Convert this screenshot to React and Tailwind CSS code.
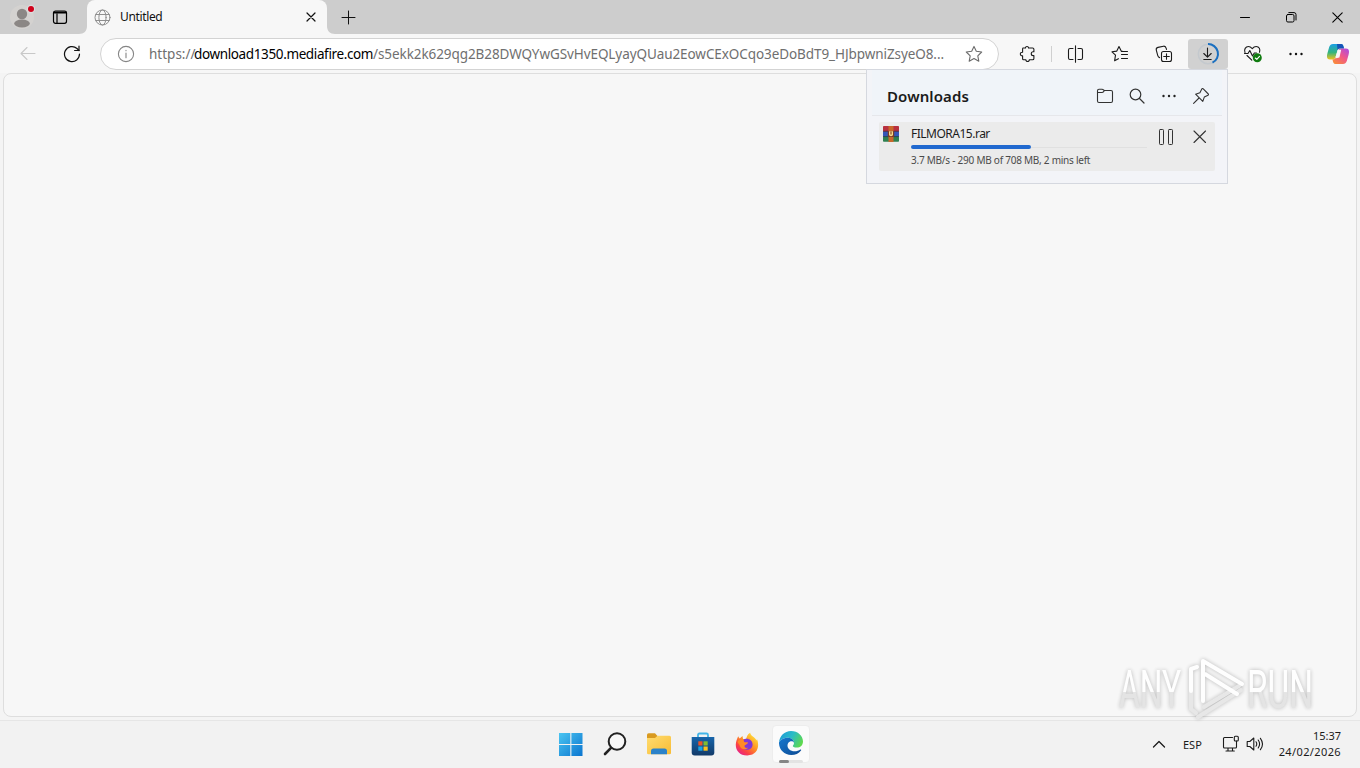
import React from 'react'

const PATH = '/s5ekk2k629qg2B28DWQYwGSvHvEQLyayQUau2EowCExOCqo3eDoBdT9_HJbpwniZsyeO8...'

function Svg({ size = 20, width, height, box, stroke = '#1b1b1b', sw = 1.1, className = '', children }) {
  const w = width || size
  const h = height || size
  return (
    <svg
      width={w}
      height={h}
      viewBox={box || `0 0 ${w} ${h}`}
      fill="none"
      stroke={stroke}
      strokeWidth={sw}
      strokeLinecap="round"
      strokeLinejoin="round"
      className={`shrink-0 ${className}`}
    >
      {children}
    </svg>
  )
}

function ToolButton({ children, className = '' }) {
  return <button className={`w-11 h-[30px] flex items-center justify-center shrink-0 ${className}`}>{children}</button>
}

function TabStrip() {
  return (
    <div className="h-[34px] bg-[#cdcdcd] flex shrink-0">
      {/* Profile */}
      <div className="w-[44px] flex items-center justify-center">
        <Svg size={26} stroke="none">
          <circle cx="13" cy="13" r="12" fill="#d4d2d0" />
          <circle cx="13" cy="10" r="5.2" fill="#8b8785" />
          <ellipse cx="13" cy="19.5" rx="7.8" ry="4" fill="#8b8785" />
          <circle cx="22" cy="5" r="4.2" fill="#dcdcdc" />
          <circle cx="22" cy="5" r="3" fill="#d0021b" />
        </Svg>
      </div>
      {/* Workspaces */}
      <div className="w-[32px] flex items-center justify-center">
        <Svg size={16} stroke="#000" sw={1.2}>
          <rect x="1.5" y="2" width="13" height="12.3" rx="2" />
          <path d="M1.5 4H14.5M2 3H14M5 5V14" />
        </Svg>
      </div>
      <div className="w-[11px] flex items-end justify-end">
        <Svg size={8} stroke="none">
          <path d="M8 0V8H0C5 8 8 5 8 0Z" fill="#f7f7f7" />
        </Svg>
      </div>
      {/* Active tab */}
      <div className="w-[240px] bg-[#f7f7f7] rounded-t-[8px] flex items-center pl-[7px]">
        <Svg size={17} box="0 0 17 17" stroke="#8f8f8f" sw={1}>
          <circle cx="8.5" cy="8.5" r="7.5" />
          <ellipse cx="8.5" cy="8.5" rx="3.6" ry="7.5" />
          <path d="M1.8 5.5H15.2M1.8 11.5H15.2" />
        </Svg>
        <span className="ml-[9px] text-[12px] leading-4 text-[#111] tracking-[-0.35px] flex-1">Untitled</span>
        <Svg size={10} stroke="#111" sw={1.2} className="mr-[11px]">
          <path d="M1 1L9 9M9 1L1 9" />
        </Svg>
      </div>
      <div className="w-[8px] flex items-end">
        <Svg size={8} stroke="none">
          <path d="M0 0V8H8C3 8 0 5 0 0Z" fill="#f7f7f7" />
        </Svg>
      </div>
      <div className="w-[27px] flex items-center justify-center">
        <Svg size={15} stroke="#111" sw={1}>
          <path d="M7.5 1V14M1 7.5H14" />
        </Svg>
      </div>
      {/* Window controls */}
      <div className="ml-auto flex">
        <div className="w-[46px] flex items-center justify-center">
          <Svg size={10} stroke="#000" sw={1}>
            <path d="M.5 5.5H9.5" />
          </Svg>
        </div>
        <div className="w-[46px] flex items-center justify-center">
          <Svg size={11} stroke="#000" sw={1}>
            <rect x=".5" y="2.5" width="7.5" height="7.5" rx="1.4" />
            <path d="M2.8 .6H8a2 2 0 0 1 2 2V8" />
          </Svg>
        </div>
        <div className="w-[46px] flex items-center justify-center">
          <Svg size={11} stroke="#000" sw={1.1}>
            <path d="M.8 .8L10.2 10.2M10.2 .8L.8 10.2" />
          </Svg>
        </div>
      </div>
    </div>
  )
}

function CopilotIcon() {
  return (
    <Svg size={24} stroke="none">
      <defs>
        <linearGradient id="cpa" x1="0" y1="0" x2="0" y2="1">
          <stop offset="0" stopColor="#1a9fe6" />
          <stop offset=".55" stopColor="#35b57c" />
          <stop offset="1" stopColor="#f2c21c" />
        </linearGradient>
        <linearGradient id="cpb" x1="1" y1="0" x2=".2" y2="1">
          <stop offset="0" stopColor="#a54be8" />
          <stop offset=".5" stopColor="#f0568b" />
          <stop offset="1" stopColor="#f98a3c" />
        </linearGradient>
      </defs>
      <path d="M7 2H15C17 2 17.5 4 18 6.5H14C12 6.5 11.5 8 11 10L9.6 15C9 17 8 17.5 6 17.5H4C.5 17.5 .6 14 1.5 11L3.2 5C4 3 5 2 7 2Z" fill="url(#cpa)" />
      <path d="M11 2H15C17 2 17.5 4 18 6.5H14C12.5 6.5 12 7 11.5 8.3Z" fill="#1554b8" />
      <path d="M17 22H9.5C7.5 22 7 20 6.5 17.5C9 17.5 9.5 16.5 10 15L12 9C12.6 7.2 13.5 6.5 15.5 6.5H20C23.5 6.5 23.4 10 22.5 13L20.8 19C20 21 19 22 17 22Z" fill="url(#cpb)" />
      <path d="M9.8 14.2L11.9 7.8L15.2 7.8L13.4 15.4L10 16.3Z" fill="#f7f7f7" />
    </Svg>
  )
}

function Toolbar() {
  return (
    <div className="h-[39px] bg-[#f7f7f7] flex items-center pl-[6px] shrink-0">
      <ToolButton>
        <Svg size={16} stroke="#c8c8c8">
          <path d="M15 7.5H1M7 1.5L1 7.5L7 13.5" />
        </Svg>
      </ToolButton>
      <ToolButton>
        <Svg size={18} stroke="#111" sw={1.2}>
          <path d="M16.5 9A7.5 7.5 0 1 1 14 3.5L16 5.5" />
          <path d="M16 1.2V5.5H11.6" />
        </Svg>
      </ToolButton>

      {/* Address bar */}
      <div className="ml-[6px] mt-px w-[899px] h-[32px] rounded-full bg-white border border-[#d3d3d3] flex items-center pl-[16px] pr-[15px]">
        <Svg size={18} stroke="#858585" sw={1.1}>
          <circle cx="9" cy="9" r="7.6" />
          <path d="M9 8V12.8M9 5.4V5.8" />
        </Svg>
        <div className="ml-[14px] flex text-[13.5px] leading-5 text-[#6f6f6f] whitespace-nowrap">
          <span className="w-[45px]">https://</span>
          <span className="w-[179px] text-black tracking-[-0.37px]">download1350.mediafire.com</span>
          <span className="tracking-[-0.08px]">{PATH}</span>
        </div>
        <Svg size={18} stroke="#6b6b6b" sw={1.1} className="ml-auto">
          <path d="M9 1.4L11.3 6.3L16.7 7L12.8 10.8L13.8 16.2L9 13.6L4.2 16.2L5.2 10.8L1.3 7L6.7 6.3Z" />
        </Svg>
      </div>

      <div className="ml-[6px] flex items-center">
        <ToolButton>
          <Svg size={18} className="ml-[2px]">
            <path d="M3.8 3H6.5C6.3 .9 9.7 .9 9.5 3H13.6Q14.9 3 14.9 4.3V6.7H14.2C11.6 6.7 11.6 10.6 14.2 10.6H14.9V13.5Q14.9 14.8 13.6 14.8H10.3C10.5 17 6.7 17 6.9 14.8H4.6Q3.6 14.8 3.6 13.8V10.8C.6 11 .6 7 3.6 7.2V4Z" />
          </Svg>
        </ToolButton>
        <div className="w-px h-4 bg-[#d0d0d0] ml-[2px] mr-[2px]" />
        <ToolButton>
          <Svg size={18}>
            <path d="M8.5 .8V17.2M6 3.5H3Q1.5 3.5 1.5 5V13Q1.5 14.5 3 14.5H6M11 3.5H14Q15.5 3.5 15.5 5V13Q15.5 14.5 14 14.5H11" />
          </Svg>
        </ToolButton>
        <ToolButton>
          <Svg size={18}>
            <path d="M11.4 6.3L10.2 6.1L8 1.5L5.8 6.1L1 6.8L4.5 10.2L3.6 15.8L7.4 13.7M10.5 6.5H16.5M10.5 9.5H16.5M10.5 13.5H16.5" />
          </Svg>
        </ToolButton>
        <ToolButton>
          <Svg size={18}>
            <rect x="6.5" y="6.5" width="10" height="10" rx="2" />
            <path d="M11.5 8.7V14.3M8.7 11.5H14.3M4.6 12.6C3.4 12.3 3 11.4 2.7 10.3L1.3 5.2C.9 3.7 1.6 2.8 3 2.4L8.5 1.2C10 1 10.8 1.6 11.2 3.3L11.5 4.4" />
          </Svg>
        </ToolButton>
        <ToolButton className="!w-10 mx-[2px] bg-[#d1d1d1] rounded-[3px]">
          <Svg size={24}>
            <circle cx="12" cy="12" r="9.7" stroke="#c4c9ce" strokeWidth={1.5} />
            <path d="M12 2.1A9.8 9.8 0 0 1 16.5 20.7" stroke="#1a6fc0" strokeWidth="2" strokeLinecap="butt" />
            <path d="M11.5 6V15M7.8 11.5L11.5 15.2L15.2 11.5M7.8 17.5H15.2" />
          </Svg>
        </ToolButton>
        <ToolButton>
          <Svg size={20} className="ml-[2px]">
            <path d="M2 8.5C.8 5.5 2.5 2.5 5.5 2.5C7.5 2.5 8.5 3.8 9.3 4.6C10.2 3.5 11.3 2.5 13.2 2.5C16.2 2.5 17.5 5.5 16.5 8.2M4 11.5L8.8 16.2" />
            <path d="M1.5 9.5H5L6.8 6.5L9.5 12L11.3 9H13.5" />
            <circle cx="14.3" cy="13.8" r="4.5" fill="#107c10" stroke="none" />
            <path d="M12.3 14L13.8 15.3L16.5 12.4" stroke="#fff" />
          </Svg>
        </ToolButton>
        <ToolButton>
          <Svg size={16} stroke="none">
            <circle cx="2.5" cy="8" r="1.2" fill="#111" />
            <circle cx="8" cy="8" r="1.2" fill="#111" />
            <circle cx="13.5" cy="8" r="1.2" fill="#111" />
          </Svg>
        </ToolButton>
        <ToolButton className="-ml-[2px]">
          <CopilotIcon />
        </ToolButton>
      </div>
    </div>
  )
}

function RarIcon() {
  return (
    <Svg size={16} stroke="none">
      <rect x="0" y="0" width="16" height="5.3" rx=".8" fill="#b8303f" />
      <rect x="0" y="5.3" width="16" height="5.3" rx=".8" fill="#3556b8" />
      <rect x="0" y="10.6" width="16" height="5.2" rx=".8" fill="#2e8050" />
      <rect x="0" y="4.8" width="16" height=".9" fill="#4b2336" />
      <rect x="0" y="10.2" width="16" height=".9" fill="#1e3a4c" />
      <rect x="5.5" y="0" width="5" height="16" fill="#c9672b" />
      <rect x="4.8" y="5" width="6.4" height="6" rx="1" fill="#7a3b26" />
      <path d="M6 5.2V8.8Q6 10.2 8 10.2Q10 10.2 10 8.8V5.2" fill="#f7d98a" />
      <rect x="7.4" y="5.5" width="1.2" height="3" fill="#8a4a2a" />
    </Svg>
  )
}

function DownloadsPanel() {
  return (
    <div className="absolute left-[866px] top-[69px] w-[362px] h-[115px] border border-[#d5d8df] bg-[#f3f4f8]">
      <div className="h-[46px] mx-[5px] border-b border-[#e6e7eb] bg-[#f0f4f9] flex items-center pl-[15px] pr-[5px] pt-[6px]">
        <h2 className="flex-1 text-[15px] leading-5 font-semibold text-[#1b1b1b] tracking-[0.1px]">Downloads</h2>
        <div className="flex">
          <span className="w-8 flex justify-center">
            <Svg size={18} stroke="#333" sw={1.1}>
              <path d="M1.5 5.5H6Q7 5.5 7.6 4.7L8.3 3.5H15Q16.5 3.5 16.5 5V14Q16.5 15.5 15 15.5H3Q1.5 15.5 1.5 14V3.7Q1.5 2.3 3 2.3H6Q7 2.3 7.6 3L8.3 3.5" />
            </Svg>
          </span>
          <span className="w-8 flex justify-center">
            <Svg size={18} stroke="#333" sw={1.2}>
              <circle cx="7.5" cy="7.5" r="5.3" />
              <path d="M11.5 11.5L16 16" />
            </Svg>
          </span>
          <span className="w-8 flex justify-center">
            <Svg size={18} stroke="none">
              <circle cx="3.5" cy="9" r="1.2" fill="#222" />
              <circle cx="9" cy="9" r="1.2" fill="#222" />
              <circle cx="14.5" cy="9" r="1.2" fill="#222" />
            </Svg>
          </span>
          <span className="w-8 flex justify-center">
            <Svg size={18} stroke="#333" sw={1.1}>
              <path d="M11 1.7L16.3 7Q16.8 7.7 16 8.2L12.3 10.1L10.8 14.4L3.6 7.2L7.9 5.7L9.8 2Q10.3 1.2 11 1.7ZM7 11L1.6 16.4" />
            </Svg>
          </span>
        </div>
      </div>

      {/* File row */}
      <div className="mt-[6px] ml-[12px] mr-[12px] h-[49px] bg-[#ebebeb] rounded-[2px] flex pl-[4px]">
        <div className="pt-[4px]">
          <RarIcon />
        </div>
        <div className="ml-[12px] w-[236px] pt-[4px]">
          <p className="text-[12px] leading-4 text-[#1b1b1b] tracking-[-0.5px] whitespace-nowrap">FILMORA15.rar</p>
          <div className="mt-[3px] h-[4px] flex items-center">
            <div className="w-[120px] h-[4px] rounded-full bg-[#2169cf]" />
            <div className="flex-1 h-px bg-[#e0e0e0]" />
          </div>
          <p className="mt-[3px] text-[10px] leading-4 text-[#4a4a4a] tracking-[-0.24px] whitespace-nowrap">3.7 MB/s - 290 MB of 708 MB, 2 mins left</p>
        </div>
        <div className="ml-auto flex pt-[6px] pr-[6px] gap-[16px]">
          <Svg size={18} stroke="#333" sw={1}>
            <rect x="2.5" y="1.5" width="4" height="15" rx=".8" />
            <rect x="11.5" y="1.5" width="4" height="15" rx=".8" />
          </Svg>
          <Svg size={18} stroke="#333" sw={1.1}>
            <path d="M3 3L14.5 14.5M14.5 3L3 14.5" />
          </Svg>
        </div>
      </div>
    </div>
  )
}

function Watermark() {
  return (
    <div className="absolute left-[1110px] top-[651px] opacity-90 drop-shadow-[0_0_2px_rgba(0,0,0,0.28)]">
      <Svg width={240} height={74} stroke="none">
        <defs>
          <linearGradient id="wm" x1="0" y1="0" x2="0" y2="1">
            <stop offset=".53" stopColor="#ffffff" />
            <stop offset=".54" stopColor="#e2e2e2" />
          </linearGradient>
        </defs>
        <text transform="translate(9 57) scale(.6 1)" fontSize="53" fontFamily="Roboto" fill="url(#wm)">ANY</text>
        <text transform="translate(137 57) scale(.63 1)" fontSize="53" fontFamily="Roboto" fill="url(#wm)">RUN</text>
        <g fill="none" strokeWidth="4">
          <path d="M81 58V40M81 58L86 62M88 66L131 39M94 56L129 35" stroke="#e6e6e6" />
          <path d="M81 40V18L87 16M93 50V10L132 33M95 23L127 43" stroke="#fff" />
        </g>
      </Svg>
    </div>
  )
}

function StartIcon() {
  return (
    <Svg size={24} stroke="none">
      <defs>
        <linearGradient id="win" x1="0" y1="0" x2="24" y2="24" gradientUnits="userSpaceOnUse">
          <stop offset="0" stopColor="#4cc7f2" />
          <stop offset="1" stopColor="#0a74cf" />
        </linearGradient>
      </defs>
      <path d="M0 1H11.3V12H0ZM12.4 1H23.5V12H12.4ZM0 13H11.3V24H0ZM12.4 13H23.5V24H12.4Z" fill="url(#win)" />
    </Svg>
  )
}

function FolderIcon() {
  return (
    <Svg size={24} stroke="none">
      <defs>
        <linearGradient id="fld" x1="0" y1="0" x2="1" y2="1">
          <stop offset="0" stopColor="#ffdc70" />
          <stop offset="1" stopColor="#f8bc35" />
        </linearGradient>
      </defs>
      <path d="M0 3Q0 1.2 1.6 1.2H8L10.5 4V8H0Z" fill="#d99a20" />
      <path d="M0 6H8L10.6 3.8H22.5Q24 3.8 24 5.3V21Q24 22.3 22.5 22.3H1.5Q0 22.3 0 21Z" fill="url(#fld)" />
      <path d="M4 22.3V19Q4 16.5 6.5 16.5H17.5Q20 16.5 20 19V22.3Z" fill="#2b82c9" />
    </Svg>
  )
}

function StoreIcon() {
  return (
    <Svg size={24} stroke="none">
      <defs>
        <linearGradient id="sto" x1="0" y1="0" x2="0" y2="1">
          <stop offset="0" stopColor="#1765ab" />
          <stop offset="1" stopColor="#123a68" />
        </linearGradient>
      </defs>
      <path d="M7 6V3Q7 1.5 8.5 1.5H15.5Q17 1.5 17 3V6" fill="none" stroke="#43b5e8" strokeWidth="1.8" />
      <path d="M.7 5H23.3V20.5Q23.3 23.5 20.3 23.5H3.7Q.7 23.5 .7 20.5Z" fill="url(#sto)" />
      <rect x="7.3" y="9.3" width="4.2" height="4.2" fill="#f15324" />
      <rect x="12.5" y="9.3" width="4.2" height="4.2" fill="#81bc2f" />
      <rect x="7.3" y="14.5" width="4.2" height="4.2" fill="#1ba4e5" />
      <rect x="12.5" y="14.5" width="4.2" height="4.2" fill="#fcc21b" />
    </Svg>
  )
}

function FirefoxIcon() {
  return (
    <Svg size={24} stroke="none">
      <defs>
        <linearGradient id="ffx" x1=".85" y1=".1" x2=".15" y2=".95">
          <stop offset="0" stopColor="#ffe13b" />
          <stop offset=".4" stopColor="#ff9423" />
          <stop offset=".75" stopColor="#fb4147" />
          <stop offset="1" stopColor="#e32090" />
        </linearGradient>
      </defs>
      <path d="M3.2 4.3C3.7 5.3 4 6 4.7 6.6L7.5 4L8 7H11C12 4.6 12.3 2.5 15.2 .8C15.2 4 20.2 5 21.5 8.5L22 7C24.6 13.5 23.3 23.2 12.2 23.5C4.5 23.5 .6 18 .8 12.5C.9 9.5 2 7 3.2 4.3Z" fill="url(#ffx)" />
      <path d="M8.2 8.2C11 5.2 17.6 7.2 17.6 12.5C17.6 16 14.8 17.8 12 17.8C8.6 17.8 6.7 15.4 6.5 13C8 14 10 13.6 11.6 12L13 10.6H9.6C9 9.8 8.6 9.2 8.2 8.2Z" fill="#8038d8" />
      <path d="M2.5 10C4 7 7 7 8.6 8.3C8.8 9.3 9.2 10.2 10 10.6H13C12.3 12.5 10.5 12.6 9.5 13.4C9.2 15.5 11 16.2 13 15.8C11 18.5 5 17.5 4.5 13Z" fill="#ff8a26" />
    </Svg>
  )
}

function EdgeIcon() {
  return (
    <Svg size={24} stroke="none">
      <defs>
        <linearGradient id="edt" x1="0" y1=".2" x2="1" y2=".6">
          <stop offset="0" stopColor="#1d9bd8" />
          <stop offset=".5" stopColor="#2bbcc6" />
          <stop offset="1" stopColor="#5fd94c" />
        </linearGradient>
        <linearGradient id="edb" x1="0" y1="0" x2="1" y2="1">
          <stop offset="0" stopColor="#1678cf" />
          <stop offset="1" stopColor="#0d4a93" />
        </linearGradient>
      </defs>
      <path d="M0 11.5C.5 5 5.5 0 12 0C19 0 24 5 24 10.4C24 14.2 21.2 16.6 17.8 16.6C15 16.6 13.7 15.6 13.8 14.9C14.2 14.2 15 13.5 15 12C15 9 12 6.8 8.5 6.8C4.5 6.8 1.2 9 0 11.5Z" fill="url(#edt)" />
      <path d="M0 11.5C1.2 9 4.5 6.8 8.5 6.8C12 6.8 14.8 8.8 15 11.7C13.8 9.9 10.8 9.8 9.2 12C7.2 15.5 9.6 19.6 14 20.2C17 20.7 19.7 19.5 21.3 18.5C22 18.2 22.5 18.8 22 19.4C19.8 22.5 16.3 24 12.3 24C5 24 -.3 18.4 0 11.5Z" fill="url(#edb)" />
    </Svg>
  )
}

function Taskbar() {
  return (
    <div className="h-[48px] bg-[#f2f2f2] border-t border-[#e6e6e6] flex shrink-0">
      <div className="w-[549px] shrink-0" />
      <div className="flex items-center pb-px">
        <div className="w-11 flex justify-center"><StartIcon /></div>
        <div className="w-11 flex justify-center">
          <Svg size={24} stroke="#222" sw={2}>
            <circle cx="14" cy="9.5" r="8.3" fill="#f8f8f8" />
            <path d="M8 15.8L2 22" strokeWidth="2.6" />
          </Svg>
        </div>
        <div className="w-11 flex justify-center"><FolderIcon /></div>
        <div className="w-11 flex justify-center"><StoreIcon /></div>
        <div className="w-11 flex justify-center"><FirefoxIcon /></div>
        <div className="w-11 flex justify-center">
          <div className="w-[38px] h-[38px] rounded-[4px] bg-[#fbfbfb] border border-[#ededed] flex flex-col items-center pt-[5px]">
            <EdgeIcon />
            <div className="mt-[5px] w-[24px] h-[3px] rounded-full bg-[#e3e3e3] flex">
              <div className="w-[10px] h-[3px] rounded-full bg-[#858585]" />
            </div>
          </div>
        </div>
      </div>
      {/* Tray */}
      <div className="flex-1 flex items-center justify-end pr-[19px] pb-[2px] text-[#1b1b1b]">
        <Svg size={14} stroke="#1b1b1b" sw={1.3}>
          <path d="M1.5 10L7 4.5L12.5 10" />
        </Svg>
        <span className="ml-[17px] w-[21px] mt-[2px] text-[11px] leading-4">ESP</span>
        <Svg size={18} stroke="#1b1b1b" sw={1.1} className="ml-[18px]">
          <path d="M10.5 2.5H2.5Q1.5 2.5 1.5 3.5V12Q1.5 13 2.5 13H13.5Q14.5 13 14.5 12V8M6 13V16M10.5 13V16M4 16H12.3M14.5 6V8" />
          <rect x="12.3" y="1.2" width="4" height="4.8" rx="1" />
        </Svg>
        <Svg size={18} stroke="#1b1b1b" sw={1.1} className="ml-[6px]">
          <path d="M1.2 6.5H3.8L7.8 3V15L3.8 11.5H1.2ZM10 6.8Q11.5 9 10 11.2M12.2 5Q15 9 12.2 13M14.4 3.3Q18.6 9 14.4 14.7" />
        </Svg>
        <div className="ml-[13px] w-[64px] text-right text-[11px] leading-4 whitespace-nowrap">
          <p>15:37</p>
          <p className="tracking-[0.38px]">24/02/2026</p>
        </div>
      </div>
    </div>
  )
}

export default function App() {
  return (
    <div className="relative w-full h-screen overflow-hidden bg-[#f4f4f4] flex flex-col font-['Noto_Sans','Open_Sans',sans-serif]">
      <TabStrip />
      <Toolbar />
      <main className="flex-1 mx-[3px] mb-[3px] rounded-[8px] border border-[#dedede] bg-[#f7f7f7]" />
      <Taskbar />
      <DownloadsPanel />
      <Watermark />
    </div>
  )
}
